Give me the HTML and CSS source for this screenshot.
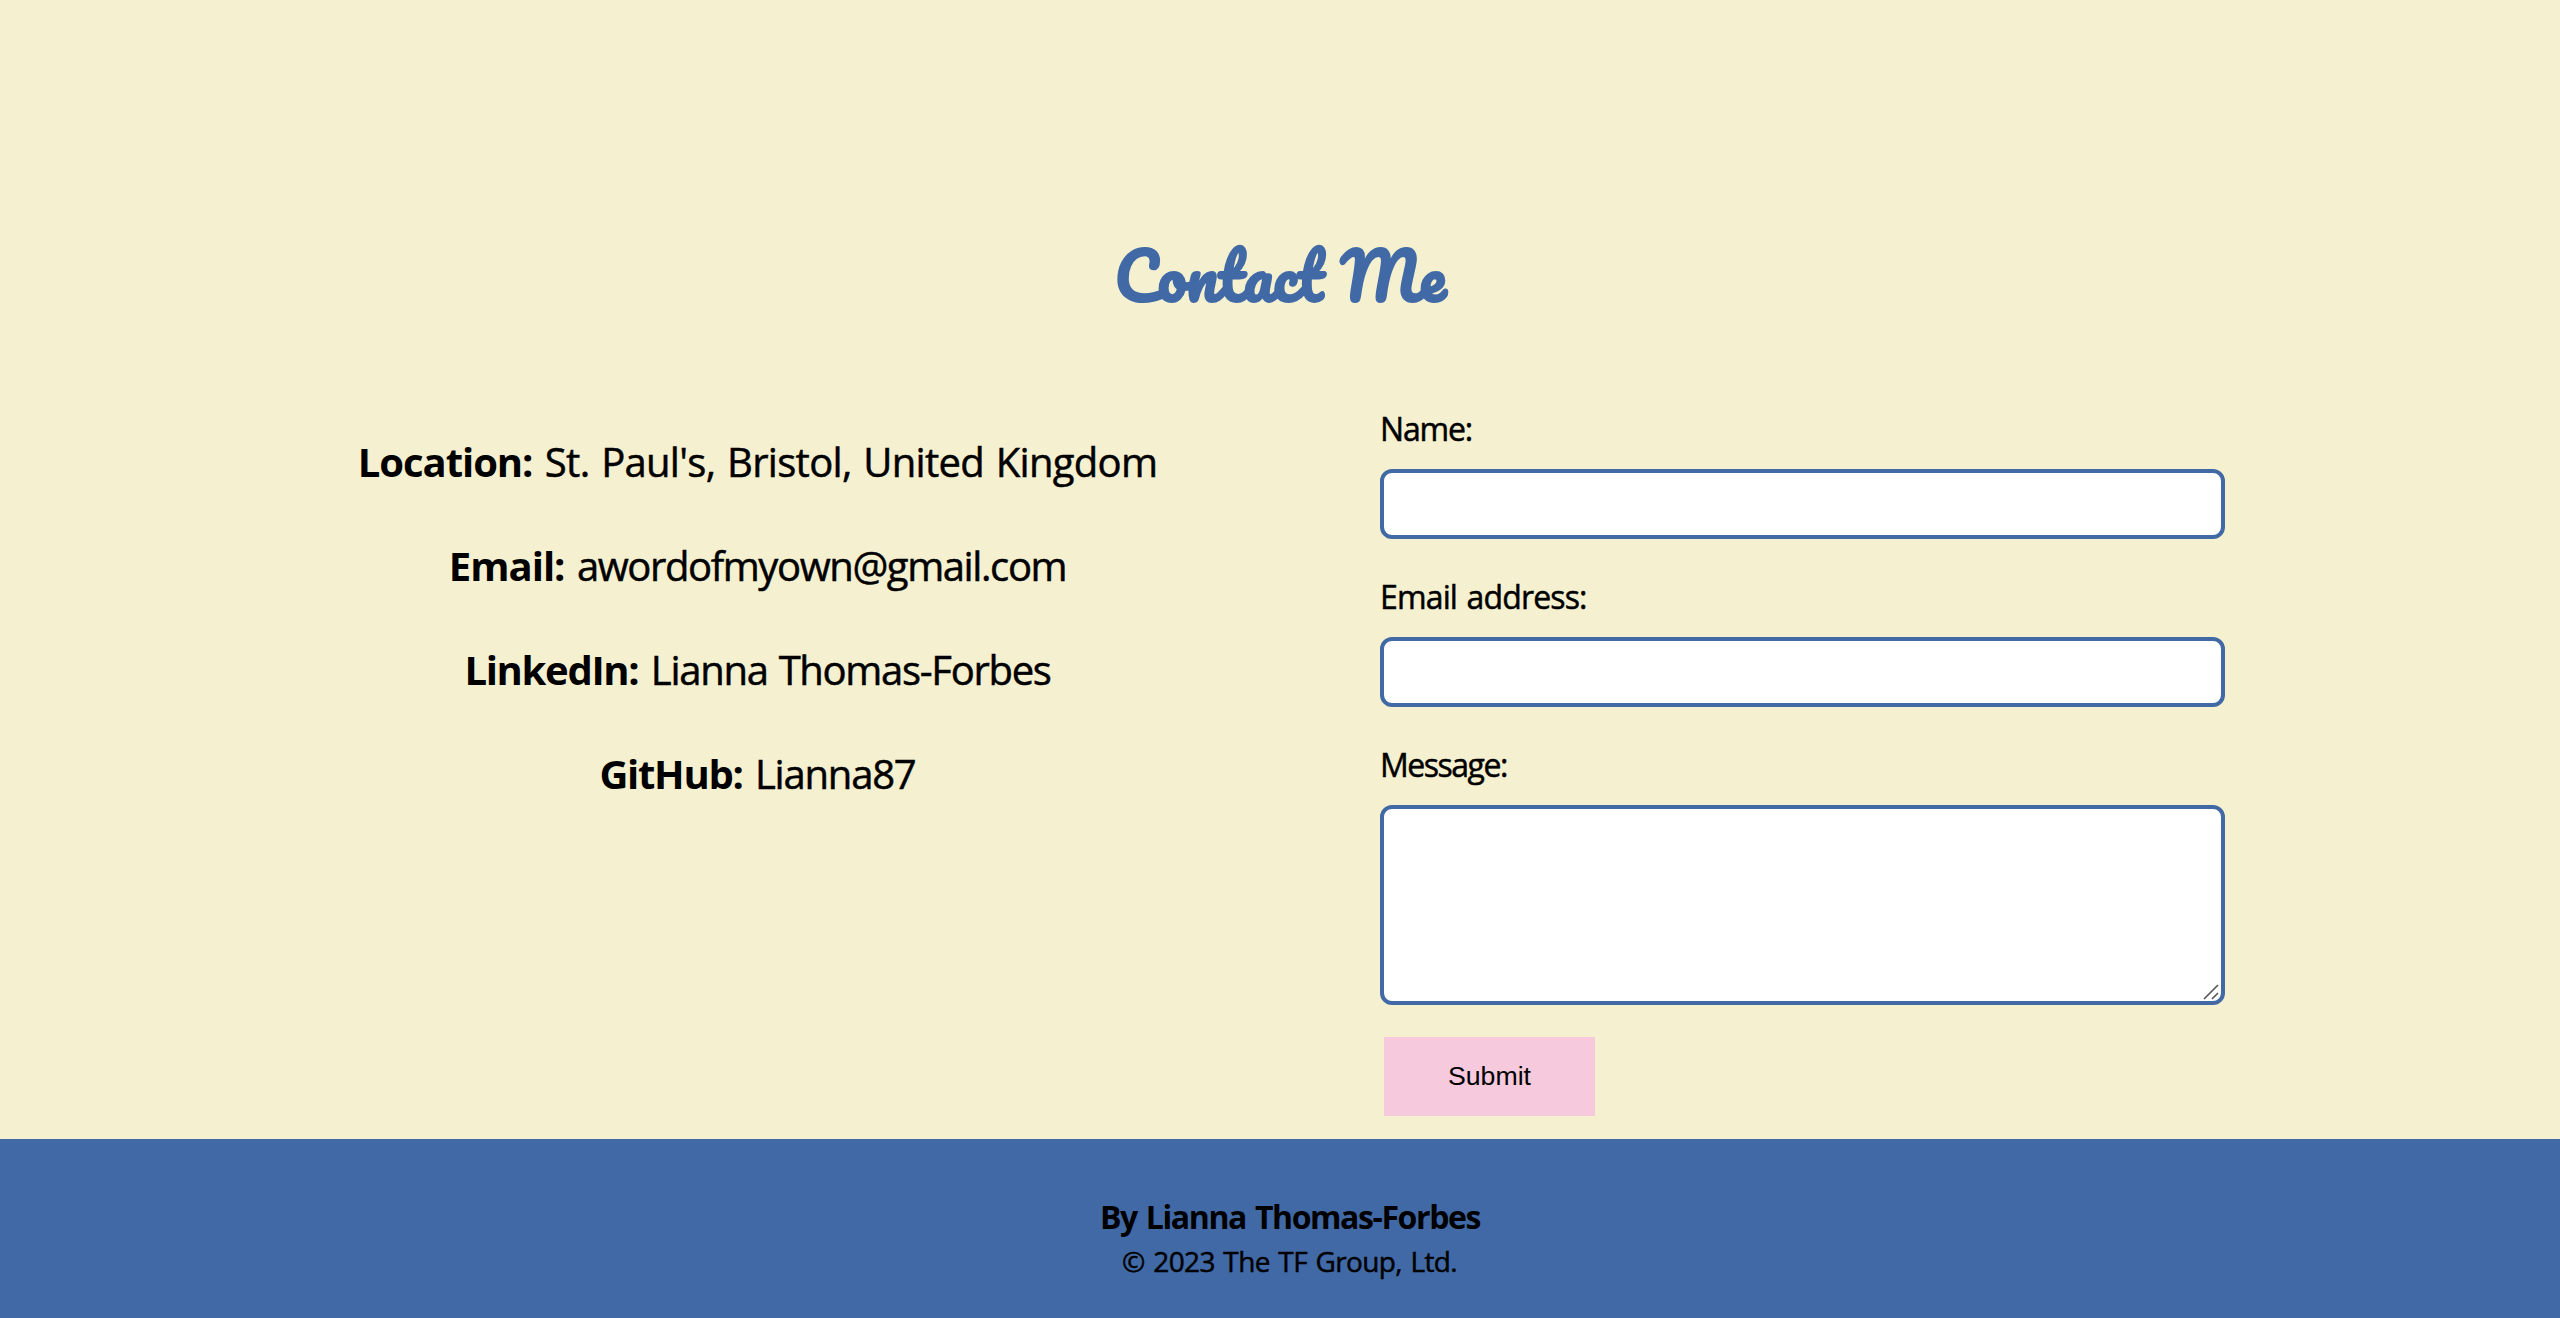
FILE: index.html
```
<!DOCTYPE html>
<html lang="en">
<head>
  <meta charset="utf-8">
  <title>Contact Me</title>
  <link rel="stylesheet" href="styles.css">
</head>
<body>
  <main class="contact">
    <h1 class="title">Contact Me</h1>
    <div class="columns">
      <ul class="details">
        <li><b class="k-location">Location:</b> <span class="v-location">St. Paul's, Bristol, United Kingdom</span></li>
        <li><b class="k-email">Email:</b> <span class="v-email">awordofmyown@gmail.com</span></li>
        <li><b class="k-linkedin">LinkedIn:</b> <span class="v-linkedin">Lianna Thomas-Forbes</span></li>
        <li><b class="k-github">GitHub:</b> <span class="v-github">Lianna87</span></li>
      </ul>
      <form class="form">
        <label class="l-name" for="name">Name:</label>
        <input class="field" id="name" type="text">
        <label class="l-email" for="email">Email address:</label>
        <input class="field" id="email" type="email">
        <label class="l-message" for="message">Message:</label>
        <div class="message-box">
          <textarea class="field message" id="message"></textarea>
          <svg class="grip" viewBox="0 0 16 16" width="16" height="16"><path d="M1 15 15 1M9 15l6-6" fill="none" stroke="#555" stroke-width="1.6"/></svg>
        </div>
        <button class="submit" type="button">Submit</button>
      </form>
    </div>
  </main>
  <footer class="footer">
    <h2 class="author">By Lianna Thomas-Forbes</h2>
    <p class="copyright">© 2023 The TF Group, Ltd.</p>
  </footer>
</body>
</html>
```
FILE: styles.css
```
* { box-sizing: border-box; }
body {
  margin: 0;
  height: 1318px;
  overflow: hidden;
  display: flex;
  flex-direction: column;
  background: #f5f0d0;
  color: #000;
  font-family: "Trebuchet MS", "Open Sans", sans-serif;
  font-weight: 500;
  word-spacing: 2px;
}
.contact { height: 1139px; padding-top: 219px; }
.title {
  margin: 0;
  height: 112px;
  line-height: 112px;
  text-align: center;
  word-spacing: 0;
  font-family: "Pacifico", cursive;
  font-size: 64px;
  font-weight: 700;
  color: #4069a6;
}
.columns { display: flex; padding-left: 335px; }
.details {
  list-style: none;
  margin: 103px 0 0;
  padding: 0;
  width: 845px;
  text-align: center;
  font-size: 40px;
  line-height: 56px;
}
.details li { height: 104px; white-space: nowrap; }
.details span, .form label, .copyright { -webkit-text-stroke: 0.5px #000; }
.form {
  display: flex;
  flex-direction: column;
  width: 845px;
  margin-left: 200px;
  padding-top: 75px;
  font-size: 32px;
}
.form label { height: 63px; line-height: 46px; }
.field {
  display: block;
  width: 100%;
  height: 70px;
  margin: 0 0 35px;
  padding: 8px;
  border: 4px solid #4069a6;
  border-radius: 12px;
  background: #fff;
  outline: none;
}
.message-box { position: relative; height: 200px; }
.message { height: 200px; resize: none; }
.grip { position: absolute; right: 6px; bottom: 5px; }
.submit {
  width: 211px;
  height: 79px;
  margin: 32px 0 0 4px;
  padding: 0;
  border: 0;
  background: #f6c9dc;
  color: #000;
  font: 26.67px Arial, "Liberation Sans", sans-serif;
}
.footer {
  height: 179px;
  padding-top: 54px;
  background: #4069a6;
  text-align: center;
}
.author { margin: 0 0 0 20px; font-size: 32px; line-height: 48px; }
.copyright { margin: 0 0 0 19px; font-size: 28px; line-height: 40px; }

.k-location { letter-spacing: -1.05px; }
.v-location { letter-spacing: -0.7px; }
.k-email { letter-spacing: -1px; }
.v-email { letter-spacing: -1.4px; }
.k-linkedin { letter-spacing: -1.3px; }
.v-linkedin { letter-spacing: -1.3px; }
.k-github { letter-spacing: -1.3px; }
.v-github { letter-spacing: -1.2px; }
.l-name { letter-spacing: -1.2px; }
.l-email { letter-spacing: -0.85px; }
.l-message { letter-spacing: -1.5px; }
.author { letter-spacing: -1.4px; }
.copyright { letter-spacing: -0.65px; }
```
